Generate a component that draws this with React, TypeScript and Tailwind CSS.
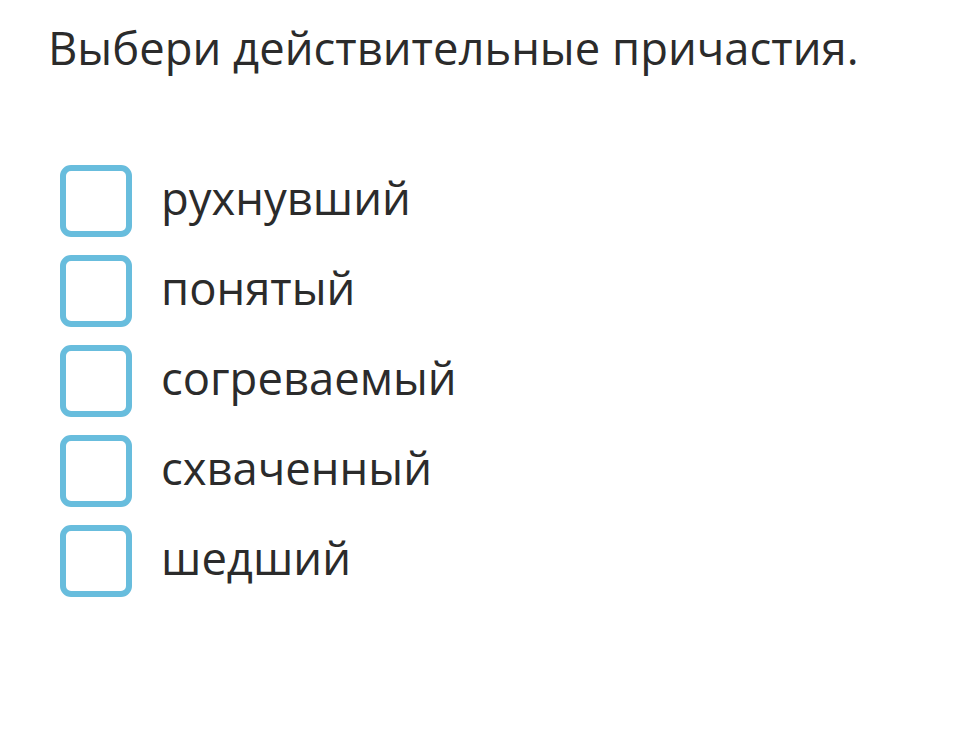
import React from "react";

const options = ["рухнувший", "понятый", "согреваемый", "схваченный", "шедший"];

export default function App() {
  return (
    <div className="min-h-[753px] w-[972px] bg-white font-['Open_Sans',sans-serif] text-[#2b2b2b]">
      <div className="pl-[48px] pt-[17px]">
        <h1 className="text-[45.4px] leading-[60px] font-normal">
          Выбери действительные причастия.
        </h1>
        <div className="mt-[88px] ml-[12px] flex flex-col gap-[18px]">
          {options.map((o) => (
            <label key={o} className="flex items-center h-[72px]">
              <span className="w-[72px] h-[72px] rounded-[11px] border-[6px] border-[#68bddd] shrink-0" />
              <span className="ml-[29px] text-[45.4px] leading-[60px] mb-[8px]">{o}</span>
            </label>
          ))}
        </div>
      </div>
    </div>
  );
}
